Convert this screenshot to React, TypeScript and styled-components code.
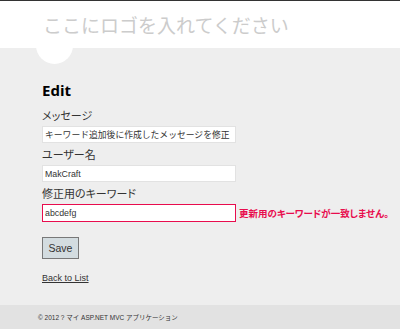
import styled, { createGlobalStyle } from 'styled-components'

const GlobalStyle = createGlobalStyle`
  html, body {
    margin: 0;
    padding: 0;
  }
  body {
    background-color: #eeeeee;
    font-family: "Liberation Sans", "Noto Sans CJK JP", sans-serif;
    color: #333;
  }
`

const Page = styled.div`
  width: 400px;
  min-height: 329px;
  display: flex;
  flex-direction: column;
  position: relative;
  overflow: hidden;
`

const Header = styled.header`
  height: 47px;
  border-top: solid 1px #333;
  background-color: #fff;
  padding-left: 43px;
  display: flex;
  align-items: flex-start;
  position: relative;
`

const Logo = styled.div`
  position: relative;
  z-index: 1;
  margin-top: 13px;
  font-family: "Noto Sans CJK JP", sans-serif;
  font-size: 19px;
  line-height: 22px;
  color: #cccccc;
  white-space: nowrap;
`

const Bump = styled.div`
  position: absolute;
  left: 36px;
  top: 26px;
  width: 37px;
  height: 37px;
  border-radius: 50%;
  background-color: #fff;
`

const Main = styled.main`
  flex: 1;
  padding: 33px 0 0 42px;
`

const Title = styled.h2`
  margin: 0;
  font-family: "Open Sans", "Liberation Sans", sans-serif;
  font-size: 15px;
  line-height: 18px;
  font-weight: bold;
  color: #000;
`

const Form = styled.form`
  display: flex;
  flex-direction: column;
  align-items: flex-start;
  margin-top: 5px;
`

const Label = styled.label`
  display: block;
  font-family: "Noto Sans CJK JP", sans-serif;
  font-feature-settings: "palt";
  font-size: 11px;
  line-height: 16px;
  color: #333;
  margin-top: 3px;
`

const Row = styled.div`
  display: flex;
  align-items: center;
  margin-top: 3px;
`

const Input = styled.input<{ $error?: boolean }>`
  box-sizing: border-box;
  width: 194px;
  height: ${p => (p.$error ? '18px' : '17px')};
  margin: 0;
  padding: 0 2px;
  border: solid 1px ${p => (p.$error ? '#e80c4d' : '#e2e2e2')};
  background-color: #fff;
  font-family: "Liberation Sans", "Noto Sans CJK JP", sans-serif;
  font-size: 8.8px;
  color: #333;
  outline: none;
`

const Error = styled.span`
  margin-left: 3px;
  font-family: "Noto Sans CJK JP", sans-serif;
  font-feature-settings: "palt";
  font-size: 9.5px;
  font-weight: bold;
  color: #e80c4d;
  white-space: nowrap;
`

const SaveButton = styled.button`
  margin-top: 15px;
  width: 37px;
  height: 22px;
  padding: 0;
  border: solid 1px #787878;
  background-color: #d3dce0;
  font-family: "Liberation Sans", sans-serif;
  font-size: 10.5px;
  color: #333;
`

const BackLink = styled.a`
  display: inline-block;
  margin-top: 13px;
  font-family: "Liberation Sans", sans-serif;
  font-size: 9px;
  line-height: 12px;
  color: #333;
  text-decoration: underline;
`

const Footer = styled.footer`
  height: 24px;
  margin-top: 20px;
  background-color: #e2e2e2;
  padding-left: 38px;
  display: flex;
  align-items: center;
  font-family: "Liberation Sans", "Noto Sans CJK JP", sans-serif;
  font-size: 6.5px;
  color: #333;
  white-space: nowrap;
`

export default function App() {
  return (
    <Page>
      <GlobalStyle />
      <Header>
        <Bump />
        <Logo>ここにロゴを入れてください</Logo>
      </Header>
      <Main>
        <Title>Edit</Title>
        <Form onSubmit={e => e.preventDefault()}>
          <Label>メッセージ</Label>
          <Row>
            <Input defaultValue="キーワード追加後に作成したメッセージを修正" />
          </Row>
          <Label>ユーザー名</Label>
          <Row>
            <Input defaultValue="MakCraft" />
          </Row>
          <Label>修正用のキーワード</Label>
          <Row>
            <Input $error defaultValue="abcdefg" />
            <Error>更新用のキーワードが一致しません。</Error>
          </Row>
          <SaveButton type="submit">Save</SaveButton>
        </Form>
        <BackLink href="#">Back to List</BackLink>
      </Main>
      <Footer>© 2012 ? マイ ASP.NET MVC アプリケーション</Footer>
    </Page>
  )
}
